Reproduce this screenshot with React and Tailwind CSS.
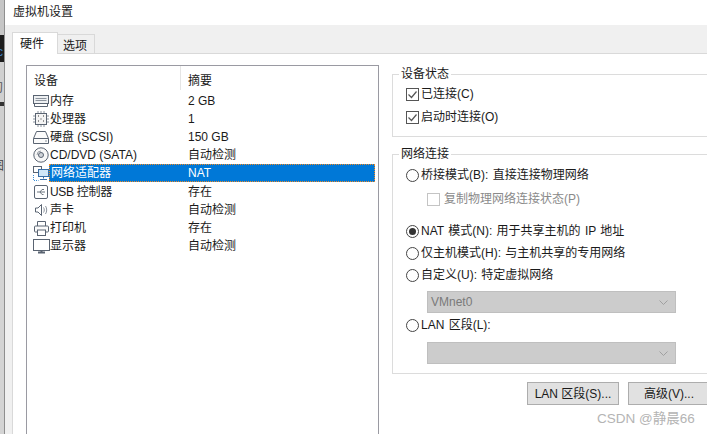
const F = { fontFamily: '"Liberation Sans","Noto Sans CJK SC",sans-serif' };

const stroke = "#5a6472";
const Mem = () => (<svg width="16" height="12" viewBox="0 0 16 12" fill="none" stroke={stroke}><rect x="0.5" y="0.5" width="15" height="8" fill="#eef0f2"/><path d="M2.5 3.5h11M2.5 5.5h11" stroke="#8c949e"/><path d="M1.5 8.5v3h13v-3" /></svg>);
const Cpu = () => (<svg width="16" height="16" viewBox="0 0 16 16" fill="none" stroke={stroke}><rect x="2.5" y="2.5" width="11" height="11" fill="#f4f4f4"/><path d="M5 0v2M8 0v2M11 0v2M5 14v2M8 14v2M11 14v2M0 5h2M0 8h2M0 11h2M14 5h2M14 8h2M14 11h2" stroke="#8c949e"/><path d="M5 5h1M10 5h1M5 10h1M10 10h1M7.5 8h1" stroke="#333"/></svg>);
const Disk = () => (<svg width="16" height="13" viewBox="0 0 16 13" fill="none" stroke={stroke}><path d="M3.5 0.5h9l3 7v5h-15v-5z" fill="#fbfbfb"/><path d="M0.5 7.5h15"/><path d="M12 10h2" stroke="#8c949e"/></svg>);
const Cd = () => (<svg width="16" height="16" viewBox="0 0 16 16" fill="none" stroke={stroke}><circle cx="8" cy="8" r="7.2" fill="#f7f7f7"/><circle cx="8" cy="8" r="2.5" fill="#cfd3d8"/><path d="M4 8a4 4 0 0 1 4-4" stroke="#9aa0a8"/></svg>);
const Net = () => (<svg width="16" height="16" viewBox="0 0 16 16" fill="none"><rect x="0.5" y="1.5" width="8" height="6" stroke="#5a6472" fill="#fff"/><path d="M0.5 10v5.5h5" stroke="#3a8fd6" strokeDasharray="1 1"/><rect x="5.5" y="4.5" width="10" height="7" stroke="#3a6ea5" fill="#cfe6f7"/><path d="M10.5 11.5v2M7 14.5h7" stroke="#3a6ea5"/></svg>);
const Usb = () => (<svg width="14" height="14" viewBox="0 0 14 14" fill="none" stroke={stroke}><rect x="0.5" y="0.5" width="13" height="13" rx="1.5" fill="#fff"/><path d="M3 7h8M6 7l2-2.5h2M6 7l2 2.5h1.5" stroke="#6d7680"/></svg>);
const Sound = () => (<svg width="13" height="14" viewBox="0 0 13 14" fill="none" stroke={stroke}><path d="M0.5 5v4h2.5l3.5 3.5v-11L3 5z" fill="#fff"/><path d="M8.5 4.5c1 1.5 1 3.5 0 5M10.5 3c1.6 2.4 1.6 5.6 0 8" stroke="#8c949e"/></svg>);
const Printer = () => (<svg width="15" height="15" viewBox="0 0 15 15" fill="none" stroke={stroke}><path d="M3.5 5V0.5h8V5"/><rect x="0.5" y="5" width="14" height="6" rx="1" fill="#fbfbfb"/><rect x="3.5" y="9" width="8" height="5.5" fill="#fff"/></svg>);
const Monitor = () => (<svg width="17" height="15" viewBox="0 0 17 15" fill="none" stroke={stroke}><rect x="0.5" y="0.5" width="16" height="11" fill="#fff" strokeWidth="1"/><path d="M5 13.5h7M8.5 12v1" strokeWidth="2"/></svg>);

const rows = [
  [Mem, "内存", "2 GB"],
  [Cpu, "处理器", "1"],
  [Disk, "硬盘 (SCSI)", "150 GB"],
  [Cd, "CD/DVD (SATA)", "自动检测"],
  [Net, "网络适配器", "NAT", true],
  [Usb, "USB 控制器", "存在", false, "tracking-[-0.3px]"],
  [Sound, "声卡", "自动检测"],
  [Printer, "打印机", "存在"],
  [Monitor, "显示器", "自动检测"],
];

const Check = () => (
  <span className="w-[13px] h-[13px] border border-[#555] bg-white flex items-center justify-center shrink-0">
    <svg width="11" height="11" viewBox="0 0 11 11" fill="none" stroke="#555" strokeWidth="1.2"><path d="M1.5 5.5l3 3 5-6" /></svg>
  </span>
);
const Radio = ({ on }) => (
  <span className="w-[13px] h-[13px] rounded-full border border-[#444] bg-white flex items-center justify-center shrink-0">
    {on && <span className="w-[7px] h-[7px] rounded-full bg-[#333]" />}
  </span>
);
const Opt = ({ children, mark, className = "" }) => (
  <div className={`flex items-center gap-[2px] h-[18px] ml-[13px] text-[#1a1a1a] ${className}`}>
    {mark}
    <span className="whitespace-nowrap [word-spacing:1px]">{children}</span>
  </div>
);
const Combo = ({ text, className = "" }) => (
  <div className={`ml-[34px] w-[249px] h-[22px] bg-[#cccccc] border border-[#bfbfbf] flex items-center justify-between pl-[3px] pr-[7px] text-[#7a7a7a] ${className}`}>
    <span>{text}</span>
    <svg width="9" height="5" viewBox="0 0 9 5" fill="none" stroke="#a0a0a0"><path d="M0.5 0.5l4 4 4-4" /></svg>
  </div>
);

export default function App() {
  return (
    <div style={F} className="relative w-[707px] h-[434px] overflow-hidden flex bg-white text-[12px] leading-[16px] text-[#1a1a1a]">
      <div className="w-[5px] shrink-0 flex flex-col bg-[#c8c8c8] border-r border-[#8f8f8f] overflow-hidden">
        <div className="h-[35px] shrink-0 bg-[#c6c6c6]" />
        <div className="h-[27px] shrink-0 bg-[#1c1c1c] pt-[9px] text-[#3a7bc0] -indent-[3px]">c</div>
        <div className="h-[40px] shrink-0 bg-[#d0d0d0] pt-[18px] text-[#555] -indent-[9px] whitespace-nowrap">初</div>
        <div className="h-[4px] shrink-0 bg-[#333]" />
        <div className="h-[66px] shrink-0 bg-[#cfcfcf] pt-[52px] text-[#444] -indent-[8px]">图</div>
        <div className="flex-1 bg-[#d4d4d4]" />
      </div>
      <div className="flex-1 min-w-0 flex flex-col">
        <div className="h-[25px] shrink-0 pl-[8px] pt-[2px] leading-[16px]"><span className="relative top-[2px]">虚拟机设置</span></div>
        <div className="flex-1 min-h-0 bg-[#f0f0f0] pl-[7px] pt-[7px] flex flex-col">
          <div className="h-[21px] shrink-0 flex items-end relative z-10">
            <div className="w-[46px] h-[22px] -mb-px bg-white border border-b-0 border-[#d9d9d9] pl-[7px] pt-[3px]">硬件</div>
            <div className="w-[38px] h-[19px] -ml-px border border-b-0 border-[#d9d9d9] pl-[5px] pt-[3px]">选项</div>
          </div>
          <div className="flex-1 min-h-0 bg-white border-t border-l border-[#d9d9d9] flex pl-[13px] pt-[11px]">
            <div className="w-[353px] h-[400px] shrink-0 border-l border-t border-r border-[#9a9aa2]">
              <div className="h-[25.6px] flex">
                <div className="w-[154px] h-[24px] border-r border-[#e5e5e5] pl-[7px] pt-[7px]">设备</div>
                <div className="pl-[7px] pt-[7px]">摘要</div>
              </div>
              {rows.map(([Icon, name, val, sel, cls = ""]) => (
                <div key={name} className="h-[18.2px] flex items-center">
                  <div className="w-[22px] ml-[3px] shrink-0 flex justify-center"><Icon /></div>
                  {sel ? (
                    <div className="w-[326px] h-[18px] -ml-[3px] flex items-center bg-[#0078d7] text-white outline-1 -outline-offset-1 outline-dotted outline-[#f08a24]">
                      <span className="w-[139px] pl-[2px]">{name}</span>
                      <span>{val}</span>
                    </div>
                  ) : (
                    <>
                      <span className={`w-[138px] -ml-[2px] shrink-0 whitespace-nowrap ${cls}`}>{name}</span>
                      <span>{val}</span>
                    </>
                  )}
                </div>
              ))}
            </div>
            <div className="flex-1 min-w-0 pl-[13px]">
              <fieldset className="h-[71px] border border-r-0 border-[#dcdcdc] mt-[1px]">
                <legend className="ml-[6px] px-[2px] leading-[16px]">设备状态</legend>
                <Opt mark={<Check />} className="mt-[3px]">已连接(C)</Opt>
                <Opt mark={<Check />} className="mt-[5px]">启动时连接(O)</Opt>
              </fieldset>
              <fieldset className="h-[228px] mt-[9px] border border-r-0 border-[#dcdcdc]">
                <legend className="ml-[6px] px-[2px] leading-[16px]">网络连接</legend>
                <Opt mark={<Radio />} className="mt-[4px]">桥接模式(B): 直接连接物理网络</Opt>
                <div className="flex items-center gap-[4px] h-[18px] ml-[34px] mt-[6px] text-[#8a8a8a]">
                  <span className="w-[13px] h-[13px] border border-[#c4c4c4] shrink-0" />
                  <span>复制物理网络连接状态(P)</span>
                </div>
                <Opt mark={<Radio on />} className="mt-[14px]">NAT 模式(N): 用于共享主机的 IP 地址</Opt>
                <Opt mark={<Radio />} className="mt-[4px]">仅主机模式(H): 与主机共享的专用网络</Opt>
                <Opt mark={<Radio />} className="mt-[4px]">自定义(U): 特定虚拟网络</Opt>
                <Combo text="VMnet0" className="mt-[7px]" />
                <Opt mark={<Radio />} className="mt-[3px]">LAN 区段(L):</Opt>
                <Combo text="" className="mt-[8px]" />
              </fieldset>
              <div className="flex gap-[9px] mt-[8px] ml-[135px]">
                <div className="w-[92px] h-[23px] shrink-0 bg-[#e1e1e1] border border-[#adadad] flex items-center justify-center">LAN 区段(S)...</div>
                <div className="w-[92px] h-[23px] shrink-0 bg-[#e1e1e1] border border-[#adadad] flex items-center justify-center pr-[10px]">高级(V)...</div>
              </div>
            </div>
          </div>
        </div>
      </div>
      <div className="absolute left-[597px] top-[410px] text-[13.5px] leading-[18px] text-[#b4b4b4] whitespace-nowrap">CSDN @静晨66</div>
    </div>
  );
}
